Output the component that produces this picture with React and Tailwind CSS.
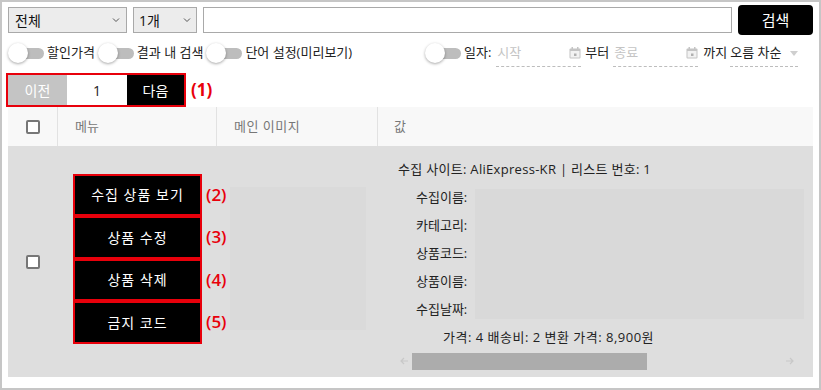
import React from 'react';

const Toggle = () => (
  <div className="relative w-[36px] h-[20px] shrink-0">
    <div className="absolute left-[10px] top-[5px] w-[26px] h-[11px] rounded-full bg-[#bdbdbd]" />
    <div className="absolute left-0 top-0 w-[20px] h-[20px] rounded-full bg-white shadow-[0_1px_3px_rgba(0,0,0,0.35)]" />
  </div>
);

const Calendar = () => (
  <svg width="12" height="12" viewBox="0 0 12 12" className="shrink-0">
    <rect x="0.5" y="1.5" width="11" height="10" rx="1" fill="#c4c4c4" />
    <rect x="1.5" y="4" width="9" height="6.5" fill="#f2f2f2" />
    <rect x="2.5" y="0" width="1.5" height="3" fill="#c4c4c4" />
    <rect x="8" y="0" width="1.5" height="3" fill="#c4c4c4" />
    <rect x="5" y="6.5" width="2.5" height="2.5" fill="#b0b0b0" />
  </svg>
);

const Chevron = () => (
  <svg width="8" height="6" viewBox="0 0 8 6">
    <path d="M1 1.5 L4 4.5 L7 1.5" stroke="#555" strokeWidth="1" fill="none" />
  </svg>
);

const Checkbox = () => (
  <div className="w-[14px] h-[14px] border-2 border-[#777] rounded-[2px] bg-white" />
);

const DateField = ({ placeholder }) => (
  <div className="w-[85px] h-[27px] flex items-center justify-between border-b border-dashed border-[#bdbdbd] mt-[1px]">
    <span className="text-[#c4c4c4] pl-[1px]">{placeholder}</span>
    <Calendar />
  </div>
);

const menuItems = [
  { label: '수집 상품 보기', tag: '(2)' },
  { label: '상품 수정', tag: '(3)' },
  { label: '상품 삭제', tag: '(4)' },
  { label: '금지 코드', tag: '(5)' },
];

const fields = ['수집이름:', '카테고리:', '상품코드:', '상품이름:', '수집날짜:'];

export default function App() {
  return (
    <div className="w-[821px] h-[390px] border-2 border-[#c6c6c6] bg-white px-[6px] pt-[3px] font-['Open_Sans','Noto_Sans_CJK_KR',sans-serif] text-[13px] text-[#222] overflow-hidden">
      {/* search row */}
      <div className="flex items-center gap-[6px] h-[30px]">
        <div className="w-[119px] h-[26px] border border-[#a9a9a9] bg-[#ececec] flex items-center justify-between pl-[6px] pr-[6px] text-[14px] text-[#111]">
          <span>전체</span>
          <Chevron />
        </div>
        <div className="w-[64px] h-[26px] border border-[#a9a9a9] bg-[#ececec] flex items-center justify-between pl-[5px] pr-[5px] text-[14px] text-[#111]">
          <span>1개</span>
          <Chevron />
        </div>
        <div className="flex-1 h-[26px] border border-[#a9a9a9] bg-white" />
        <button className="w-[75px] h-[30px] rounded-[4px] bg-black text-white text-[15px]">검색</button>
      </div>

      {/* options row */}
      <div className="flex items-center h-[36px]">
        <div className="w-[417px] flex items-center">
          <Toggle />
          <span className="ml-[3px] mr-[3px]">할인가격</span>
          <Toggle />
          <span className="ml-[3px] mr-[3px]">결과 내 검색</span>
          <Toggle />
          <span className="ml-[3px]">단어 설정(미리보기)</span>
        </div>
        <Toggle />
        <span className="ml-[3px] mr-[5px]">일자:</span>
        <DateField placeholder="시작" />
        <span className="ml-[4px] mr-[4px]">부터</span>
        <DateField placeholder="종료" />
        <span className="ml-[5px] mr-[3px]">까지</span>
        <div className="w-[68px] h-[27px] mt-[1px] flex items-center justify-between border-b border-dashed border-[#bdbdbd]">
          <span>오름 차순</span>
          <svg width="8" height="5" viewBox="0 0 8 5">
            <path d="M0 0 L8 0 L4 5 Z" fill="#cfcfcf" />
          </svg>
        </div>
      </div>

      {/* pagination */}
      <div className="flex items-center mt-[2px] -ml-[2px] h-[34px]">
        <div className="flex border-2 border-[#e8000b] h-[34px]">
          <div className="w-[59px] bg-[#c4c4c4] text-white text-[14px] flex items-center justify-center">이전</div>
          <div className="w-[60px] bg-white text-[14px] flex items-center justify-center">1</div>
          <div className="w-[57px] bg-black text-white text-[14px] flex items-center justify-center">다음</div>
        </div>
        <span className="ml-[5px] text-[#e8000b] font-bold text-[17px]">(1)</span>
      </div>

      {/* table */}
      <div className="flex h-[39px] bg-[#f8f8f8] text-[#777]">
        <div className="w-[50px] flex items-center justify-center border-r border-[#e2e2e2]">
          <Checkbox />
        </div>
        <div className="w-[159px] flex items-center pl-[17px] border-r border-[#e2e2e2]">메뉴</div>
        <div className="w-[161px] flex items-center pl-[17px] border-r border-[#e2e2e2] tracking-[0.5px]">메인 이미지</div>
        <div className="flex-1 flex items-center pl-[16px]">값</div>
      </div>
      <div className="flex h-[231px] bg-[#dedede]">
        <div className="w-[50px] flex items-center justify-center">
          <Checkbox />
        </div>
        <div className="w-[159px] flex flex-col items-center justify-center pb-[6px]">
          {menuItems.map((m) => (
            <div key={m.label} className="relative w-[129px] h-[42.5px] border-2 border-[#e8000b] bg-black text-white text-[14px] tracking-[1px] flex items-center justify-center">
              {m.label}
              <span className="absolute left-[131px] top-[6px] text-[#e8000b] font-semibold text-[17px] tracking-normal">{m.tag}</span>
            </div>
          ))}
        </div>
        <div className="w-[161px] flex items-start pl-[13px] pt-[41px]">
          <div className="w-[136px] h-[143px] bg-[#dadada]" />
        </div>
        <div className="flex-1 flex flex-col pl-[20px] pt-[10px]">
          <div className="h-[28px] flex items-center tracking-[0.3px]">수집 사이트: AliExpress-KR | 리스트 번호: 1</div>
          <div className="flex ml-[18px]">
            <div className="w-[59px] flex flex-col">
              {fields.map((f) => (
                <div key={f} className="h-[28px] flex items-center">{f}</div>
              ))}
            </div>
            <div className="w-[329px] my-[5px] bg-[#d9d9d9]" />
          </div>
          <div className="h-[28px] flex items-center ml-[45px] tracking-[0.5px]">가격: 4 배송비: 2 변환 가격: 8,900원</div>
          <div className="flex items-center h-[18px] w-[398px]">
            <svg width="14" height="10" viewBox="0 0 14 10">
              <path d="M10 5 H3 M6 2 L3 5 L6 8" stroke="#c8c8c8" strokeWidth="1.2" fill="none" />
            </svg>
            <div className="w-[235px] h-[17px] bg-[#acacac]" />
            <div className="flex-1" />
            <svg width="14" height="10" viewBox="0 0 14 10">
              <path d="M4 5 H11 M8 2 L11 5 L8 8" stroke="#c8c8c8" strokeWidth="1.2" fill="none" />
            </svg>
          </div>
        </div>
      </div>
    </div>
  );
}
